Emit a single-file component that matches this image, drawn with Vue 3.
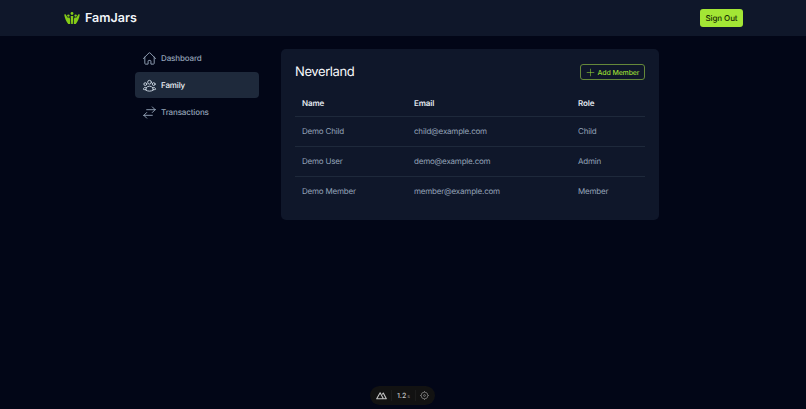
<script setup>
const navItems = [
  { label: 'Dashboard', icon: 'home' },
  { label: 'Family', icon: 'family', active: true },
  { label: 'Transactions', icon: 'swap' }
]

const members = [
  { name: 'Demo Child', email: 'child@example.com', role: 'Child' },
  { name: 'Demo User', email: 'demo@example.com', role: 'Admin' },
  { name: 'Demo Member', email: 'member@example.com', role: 'Member' }
]
</script>

<template>
  <div class="page">
    <header class="topbar">
      <div class="brand">
        <svg class="logo" viewBox="0 0 16 12" width="16" height="12" fill="#84cc16">
          <circle cx="8" cy="1.5" r="1.4" />
          <circle cx="4.4" cy="3.6" r="1.2" />
          <circle cx="11.6" cy="3.6" r="1.2" />
          <path d="M0.2 2.6 L1.6 2.2 L3.4 5.6 L5.4 5.6 L6.2 7.2 L6.2 12 L4.2 12 C2.2 9.6 0.8 6.4 0.2 2.6 Z" />
          <path d="M15.8 2.6 L14.4 2.2 L12.6 5.6 L10.6 5.6 L9.8 7.2 L9.8 12 L11.8 12 C13.8 9.6 15.2 6.4 15.8 2.6 Z" />
          <path d="M6.7 4 H9.3 L8.8 12 H7.2 Z" />
        </svg>
        <span class="brand-name">FamJars</span>
      </div>
      <button class="signout">Sign Out</button>
    </header>

    <div class="body">
      <nav class="sidebar">
        <a v-for="item in navItems" :key="item.label" class="nav-item" :class="{ active: item.active }">
          <svg class="nav-icon" viewBox="0 0 24 24" width="15" height="15" fill="none" stroke="currentColor" stroke-width="1.5" stroke-linecap="round" stroke-linejoin="round">
            <template v-if="item.icon === 'home'">
              <path d="M2.25 12l8.95-8.95c.44-.44 1.15-.44 1.59 0L21.75 12" />
              <path d="M4.5 9.75V19.9c0 .62.5 1.1 1.1 1.1h4.15v-4.9c0-.62.5-1.1 1.1-1.1h2.3c.62 0 1.1.5 1.1 1.1V21h4.15c.62 0 1.1-.5 1.1-1.1V9.75" />
            </template>
            <template v-else-if="item.icon === 'family'">
              <path d="M18 18.7a9 9 0 0 0 3.7-.5 3 3 0 0 0-4.7-2.6M18 18.7v.05c0 .22-.01.44-.04.66A11.9 11.9 0 0 1 12 21c-2.2 0-4.2-.6-5.96-1.6A6 6 0 0 1 6 18.7m12 0a6 6 0 0 0-.94-3.2M6 18.7a9 9 0 0 1-3.7-.5 3 3 0 0 1 4.7-2.6M6 18.7a6 6 0 0 1 .94-3.2m0 0a6 6 0 0 1 10.12 0" />
              <path d="M15 6.75a3 3 0 1 1-6 0 3 3 0 0 1 6 0Z" />
              <path d="M21 9.75a2.25 2.25 0 1 1-4.5 0 2.25 2.25 0 0 1 4.5 0Z" />
              <path d="M7.5 9.75a2.25 2.25 0 1 1-4.5 0 2.25 2.25 0 0 1 4.5 0Z" />
            </template>
            <template v-else>
              <path d="M7.5 21L3 16.5m0 0L7.5 12M3 16.5h13.5" />
              <path d="M16.5 3L21 7.5m0 0L16.5 12M21 7.5H7.5" />
            </template>
          </svg>
          <span>{{ item.label }}</span>
        </a>
      </nav>

      <main class="card">
        <div class="card-head">
          <h1 class="card-title">Neverland</h1>
          <button class="add-btn">
            <svg viewBox="0 0 24 24" width="9" height="9" fill="none" stroke="currentColor" stroke-width="1.5" stroke-linecap="round">
              <path d="M12 3v18M3 12h18" />
            </svg>
            Add Member
          </button>
        </div>
        <table class="members">
          <thead>
            <tr>
              <th class="col-name">Name</th>
              <th class="col-email">Email</th>
              <th>Role</th>
            </tr>
          </thead>
          <tbody>
            <tr v-for="m in members" :key="m.email">
              <td>{{ m.name }}</td>
              <td>{{ m.email }}</td>
              <td>{{ m.role }}</td>
            </tr>
          </tbody>
        </table>
      </main>
    </div>

    <div class="devbar">
      <svg viewBox="0 0 16 12" width="11" height="9" fill="none" stroke="#c4c4c4" stroke-width="1.6" stroke-linejoin="round">
        <path d="M1 10.8 L6 2 L10.8 10.8 Z" />
        <path d="M9 4.5 L10.6 2.4 L15 10.8 H11.5" />
      </svg>
      <span class="dev-sep"></span>
      <span class="dev-time">1.2<small>s</small></span>
      <span class="dev-sep"></span>
      <svg viewBox="0 0 16 16" width="9" height="9" fill="none" stroke="#8a8a8a" stroke-width="1.3">
        <circle cx="8" cy="8" r="6" />
        <circle cx="8" cy="8" r="1.6" />
        <path d="M8 0v2M8 14v2M0 8h2M14 8h2" />
      </svg>
    </div>
  </div>
</template>

<style scoped>
.page {
  position: relative;
  min-height: 409px;
  background: #020617;
  font-family: Inter, "Liberation Sans", sans-serif;
  text-rendering: geometricPrecision;
  color: #94a3b8;
  overflow: hidden;
}

.topbar {
  height: 36px;
  background: #0f172a;
  display: flex;
  align-items: center;
  justify-content: space-between;
  padding: 0 63px 0 64px;
}

.brand {
  display: flex;
  align-items: center;
  gap: 5px;
}

.brand-name {
  font-size: 12.5px;
  font-weight: 600;
  color: #f1f5f9;
}

.signout {
  height: 18px;
  width: 43px;
  padding: 0;
  border: none;
  border-radius: 3px;
  background: #a3e635;
  color: #1a2e05;
  font: 500 8px Inter, "Liberation Sans", sans-serif;
  letter-spacing: -0.1px;
  text-rendering: geometricPrecision;
}

.body {
  display: flex;
  align-items: flex-start;
  gap: 22px;
  padding: 9px 0 0 135px;
}

.sidebar {
  width: 124px;
  display: flex;
  flex-direction: column;
  gap: 1px;
}

.nav-item {
  height: 26px;
  display: flex;
  align-items: center;
  gap: 4px;
  padding: 0 7px;
  border-radius: 4px;
  font-size: 8px;
  font-weight: 500;
  letter-spacing: -0.13px;
  color: #94a3b8;
}

.nav-item.active {
  background: #1e293b;
  color: #f1f5f9;
}

.nav-icon {
  color: #94a3b8;
}

.nav-item.active .nav-icon {
  color: #cbd5e1;
}

.card {
  width: 378px;
  margin-top: 4px;
  padding: 14px 14px 14px;
  box-sizing: border-box;
  background: #0f172a;
  border-radius: 5px;
}

.card-head {
  display: flex;
  align-items: center;
  justify-content: space-between;
  height: 18px;
}

.card-title {
  margin: 0;
  font-size: 13px;
  font-weight: 400;
  letter-spacing: -0.4px;
  color: #f8fafc;
}

.add-btn {
  height: 16px;
  width: 65px;
  padding: 0;
  display: flex;
  align-items: center;
  justify-content: center;
  gap: 3px;
  background: transparent;
  border: 1px solid #65883a;
  border-radius: 3px;
  color: #98d935;
  font: 500 7px Inter, "Liberation Sans", sans-serif;
  letter-spacing: -0.15px;
  text-rendering: geometricPrecision;
}

.members {
  width: 100%;
  margin-top: 8px;
  border-collapse: collapse;
  table-layout: fixed;
  font-size: 8px;
  letter-spacing: -0.2px;
}

.members th {
  height: 27px;
  padding: 0 7px;
  text-align: left;
  font-weight: 600;
  letter-spacing: -0.1px;
  color: #e2e8f0;
  border-bottom: 1px solid #1e293b;
}

.members td {
  height: 28px;
  padding: 0 7px 1px;
  color: #94a3b8;
  border-bottom: 1px solid #1e293b;
}

.members tr:last-child td {
  border-bottom: none;
}

.col-name {
  width: 98px;
}

.col-email {
  width: 150px;
}

.devbar {
  position: absolute;
  left: 370px;
  top: 386px;
  width: 65px;
  height: 19px;
  box-sizing: border-box;
  display: flex;
  align-items: center;
  justify-content: space-between;
  padding: 0 6px;
  border-radius: 10px;
  background: #121212;
  color: #c4c4c4;
}

.dev-sep {
  width: 1px;
  height: 11px;
  background: #1c1c1c;
}

.dev-time {
  font-size: 7px;
  font-weight: 500;
}

.dev-time small {
  font-size: 5px;
  color: #777;
  margin-left: 1px;
}
</style>
